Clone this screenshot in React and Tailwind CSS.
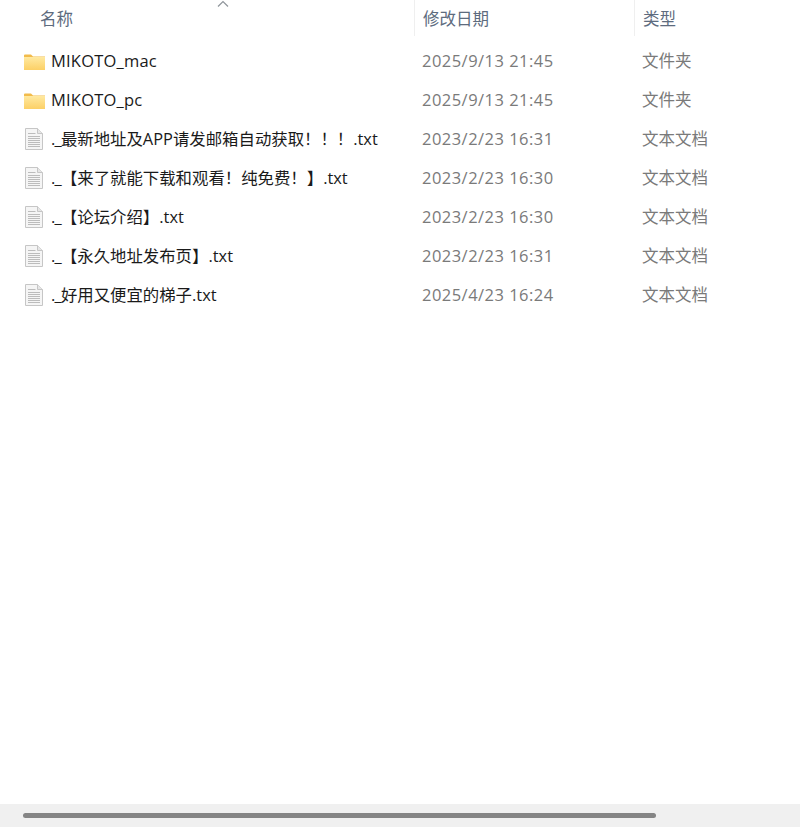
const FONT = "font-['Open_Sans','Noto_Sans_CJK_SC',sans-serif]";

function FolderIcon() {
  return (
    <svg width="21" height="16" viewBox="0 0 21 16" className="ml-[24px] shrink-0">
      <defs>
        <linearGradient id="fb" x1="0" y1="0" x2="0" y2="1">
          <stop offset="0" stopColor="#ffe9a0" />
          <stop offset="1" stopColor="#fcd066" />
        </linearGradient>
      </defs>
      <path d="M0 1.5 Q0 0.5 1 0.5 H7 L9 2.5 H21 V15.5 H0 Z" fill="#f2bb4b" />
      <rect x="0" y="3" width="21" height="13" fill="url(#fb)" />
    </svg>
  );
}

function FileIcon() {
  return (
    <svg width="18" height="22" viewBox="0 0 18 22" className="ml-[25px] shrink-0">
      <path d="M0.5 0.5 H12.5 L17.5 5.5 V21.5 H0.5 Z" fill="#f5f5f5" stroke="#c6c6c6" />
      <path d="M12.5 0.5 V5.5 H17.5" fill="#e6e6e6" stroke="#c6c6c6" />
      <path d="M3 5.5 H10.5 M3 8.5 H15 M3 10.5 H15 M3 12.5 H15 M3 14.5 H15 M3 16.5 H15 M3 18.5 H15" stroke="#bcbcbc" strokeWidth="1" />
    </svg>
  );
}

const rows = [
  ["folder", "", "MIKOTO_mac", "2025/9/13 21:45", "文件夹"],
  ["folder", "", "MIKOTO_pc", "2025/9/13 21:45", "文件夹"],
  ["file", "._", "最新地址及APP请发邮箱自动获取\uFF01\uFF01\uFF01.txt", "2023/2/23 16:31", "文本文档"],
  ["file", "._", "【来了就能下载和观看\uFF01纯免费\uFF01】.txt", "2023/2/23 16:30", "文本文档"],
  ["file", "._", "【论坛介绍】.txt", "2023/2/23 16:30", "文本文档"],
  ["file", "._", "【永久地址发布页】.txt", "2023/2/23 16:31", "文本文档"],
  ["file", "._", "好用又便宜的梯子.txt", "2025/4/23 16:24", "文本文档"],
];

export default function App() {
  return (
    <div className={`relative flex h-[827px] w-[800px] flex-col overflow-hidden bg-white text-[16.5px] ${FONT}`}>
      <svg width="12" height="7" viewBox="0 0 12 7" className="absolute left-[217px] top-[0px]">
        <path d="M1 6.5 L6 1.5 L11 6.5" fill="none" stroke="#8f959b" strokeWidth="1.2" />
      </svg>
      <div className="grid h-[36px] grid-cols-[414px_220px_166px] text-[#5d6b7e]">
        <div className="flex items-center pl-[40px] pt-[2px]">名称</div>
        <div className="flex items-center border-l border-[#efefef] pl-[8px] pt-[2px]">修改日期</div>
        <div className="flex items-center border-l border-[#efefef] pl-[8px] pt-[2px]">类型</div>
      </div>
      <div className="mt-[6px] flex flex-1 flex-col">
        {rows.map(([kind, prefix, name, date, type]) => (
          <div key={name} className="grid h-[39px] grid-cols-[414px_220px_166px] items-center">
            <div className="flex items-center">
              <div className="flex w-[51px] shrink-0">
                {kind === "folder" ? <FolderIcon /> : <FileIcon />}
              </div>
              <span className={`whitespace-nowrap text-[#1a1a1a] ${kind === "folder" ? "tracking-[0.2px]" : "text-[16.4px]"}`}>
                <span className="tracking-[-0.8px]">{prefix}</span>
                {name}
              </span>
            </div>
            <div className="pl-[8px] tracking-[0.47px] text-[#7a7a7a]">{date}</div>
            <div className="pl-[8px] text-[#7a7a7a]">{type}</div>
          </div>
        ))}
      </div>
      <div className="flex h-[23px] items-center bg-[#f0f0f0] pl-[23px]">
        <div className="h-[5px] w-[633px] rounded-full bg-[#858585]" />
      </div>
    </div>
  );
}
